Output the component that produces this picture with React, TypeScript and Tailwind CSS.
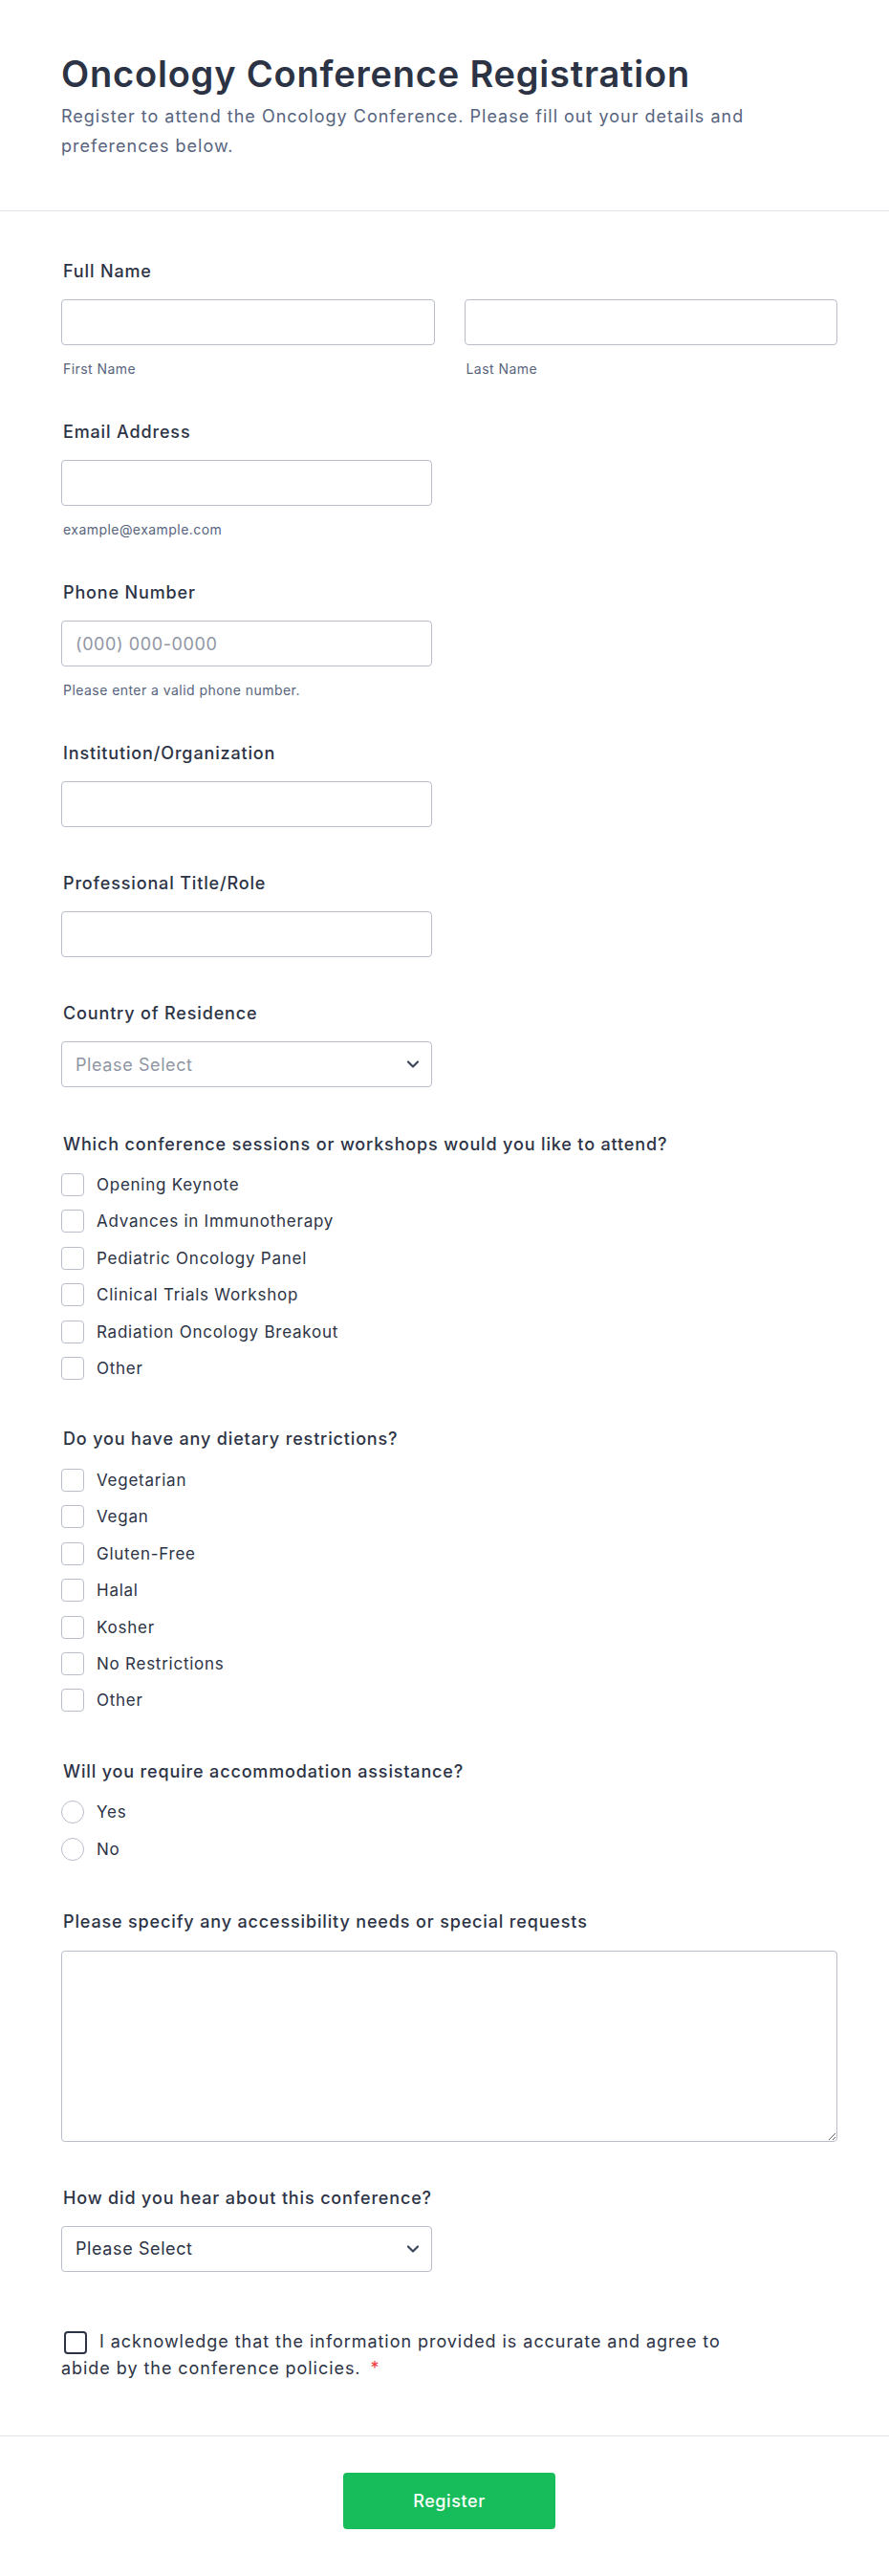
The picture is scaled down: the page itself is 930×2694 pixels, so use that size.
import React from "react";

const Chevron = () => (
  <svg width="14" height="8" viewBox="0 0 14 8" fill="none">
    <path d="M2 1.5L7 6.5L12 1.5" stroke="#3d465a" strokeWidth="2.2" strokeLinecap="round" strokeLinejoin="round" />
  </svg>
);

const Label = ({ children }: { children: React.ReactNode }) => (
  <div className="pl-[2px] text-[18px] leading-6 font-medium tracking-[0.85px] text-[#2c3345]">{children}</div>
);

const Sub = ({ children }: { children: React.ReactNode }) => (
  <div className="mt-[15px] pl-[2px] text-[14px] leading-5 tracking-[0.45px] text-[#57647e]">{children}</div>
);

const TextInput = ({ placeholder, className = "" }: { placeholder?: string; className?: string }) => (
  <input
    placeholder={placeholder}
    className={`block h-12 rounded-[4px] border border-[#b8bdc9] bg-white px-[14px] text-[18px] tracking-[0.6px] text-[#2c3345] outline-none placeholder:text-[#8f96a3] ${className}`}
  />
);

const SelectBox = ({ dark }: { dark?: boolean }) => (
  <div className="flex h-12 w-[388px] items-center justify-between rounded-[4px] border border-[#b8bdc9] bg-white pl-[14px] pr-[12px]">
    <span className={`text-[18px] tracking-[0.6px] ${dark ? "text-[#2c3345]" : "text-[#8f96a3]"}`}>Please Select</span>
    <Chevron />
  </div>
);

const CheckRow = ({ text, round }: { text: string; round?: boolean }) => (
  <div className="flex h-6 items-center gap-[13px]">
    <span className={`block h-6 w-6 shrink-0 border border-[#b8bdc9] bg-white ${round ? "rounded-full" : "rounded-[4px]"}`} />
    <span className="text-[17px] leading-6 tracking-[0.75px] text-[#2c3345]">{text}</span>
  </div>
);

export default function App() {
  const sessions = [
    "Opening Keynote",
    "Advances in Immunotherapy",
    "Pediatric Oncology Panel",
    "Clinical Trials Workshop",
    "Radiation Oncology Breakout",
    "Other",
  ];
  const dietary = ["Vegetarian", "Vegan", "Gluten-Free", "Halal", "Kosher", "No Restrictions", "Other"];

  return (
    <div className="min-h-[2694px] bg-white font-['Inter',sans-serif] text-[#2c3345]">
      <header className="border-b border-[#e0e3ea] pb-[52px] pl-16 pr-[54px] pt-[54px]">
        <h1 className="text-[38px] font-semibold leading-[46px] tracking-[0.8px] text-[#2c3345]">
          Oncology Conference Registration
        </h1>
        <p className="mt-[6px] text-[18px] leading-[31px] tracking-[1px] text-[#57647e]">
          Register to attend the Oncology Conference. Please fill out your details and preferences below.
        </p>
      </header>

      <main className="border-b border-[#e0e3ea] pb-[56px] pl-16 pr-[54px] pt-[51px]">
        {/* Full Name */}
        <div>
          <Label>Full Name</Label>
          <div className="mt-[17px] grid grid-cols-2 gap-x-[31px]">
            <div>
              <TextInput className="w-full" />
              <Sub>First Name</Sub>
            </div>
            <div>
              <TextInput className="w-full" />
              <Sub>Last Name</Sub>
            </div>
          </div>
        </div>

        {/* Email */}
        <div className="mt-[44px]">
          <Label>Email Address</Label>
          <TextInput className="mt-[17px] w-[388px]" />
          <Sub>example@example.com</Sub>
        </div>

        {/* Phone */}
        <div className="mt-[44px]">
          <Label>Phone Number</Label>
          <TextInput className="mt-[17px] w-[388px]" placeholder="(000) 000-0000" />
          <Sub>Please enter a valid phone number.</Sub>
        </div>

        {/* Institution */}
        <div className="mt-[44px]">
          <Label>Institution/Organization</Label>
          <TextInput className="mt-[17px] w-[388px]" />
        </div>

        {/* Professional */}
        <div className="mt-[47px]">
          <Label>Professional Title/Role</Label>
          <TextInput className="mt-[17px] w-[388px]" />
        </div>

        {/* Country */}
        <div className="mt-[47px]">
          <Label>Country of Residence</Label>
          <div className="mt-[17px]">
            <SelectBox />
          </div>
        </div>

        {/* Sessions */}
        <div className="mt-[48px]">
          <Label>Which conference sessions or workshops would you like to attend?</Label>
          <div className="mt-[18px] flex flex-col gap-[14.4px]">
            {sessions.map((s) => (
              <CheckRow key={s} text={s} />
            ))}
          </div>
        </div>

        {/* Dietary */}
        <div className="mt-[50px]">
          <Label>Do you have any dietary restrictions?</Label>
          <div className="mt-[19px] flex flex-col gap-[14.4px]">
            {dietary.map((s) => (
              <CheckRow key={s} text={s} />
            ))}
          </div>
        </div>

        {/* Accommodation */}
        <div className="mt-[51px]">
          <Label>Will you require accommodation assistance?</Label>
          <div className="mt-[18px] flex flex-col gap-[14.4px]">
            <CheckRow text="Yes" round />
            <CheckRow text="No" round />
          </div>
        </div>

        {/* Accessibility */}
        <div className="mt-[52px]">
          <Label>Please specify any accessibility needs or special requests</Label>
          <textarea className="mt-[18px] block h-[200px] w-full rounded-[4px] border border-[#b8bdc9] bg-white px-[14px] py-2 text-[18px] outline-none" />
        </div>

        {/* Hear */}
        <div className="mt-[47px]">
          <Label>How did you hear about this conference?</Label>
          <div className="mt-[17px]">
            <SelectBox dark />
          </div>
        </div>

        {/* Acknowledge */}
        <p className="mt-[59px] w-[710px] text-[18px] leading-[28px] tracking-[0.95px] text-[#2c3345]">
          <span className="ml-[3px] mr-[13px] inline-block h-6 w-6 rounded-[4px] border-2 border-[#2c3345] align-middle" />
          I acknowledge that the information provided is accurate and agree to abide by the conference policies.
          <span className="ml-[10px] align-top text-[18px] text-[#f23a3c]">*</span>
        </p>
      </main>

      <footer className="flex justify-center pb-[50px] pl-16 pr-[54px] pt-[38px]">
        <button className="h-[59px] w-[222px] rounded-[4px] bg-[#18bd5b] text-[18px] font-medium tracking-[0.6px] text-white">
          Register
        </button>
      </footer>
    </div>
  );
}
